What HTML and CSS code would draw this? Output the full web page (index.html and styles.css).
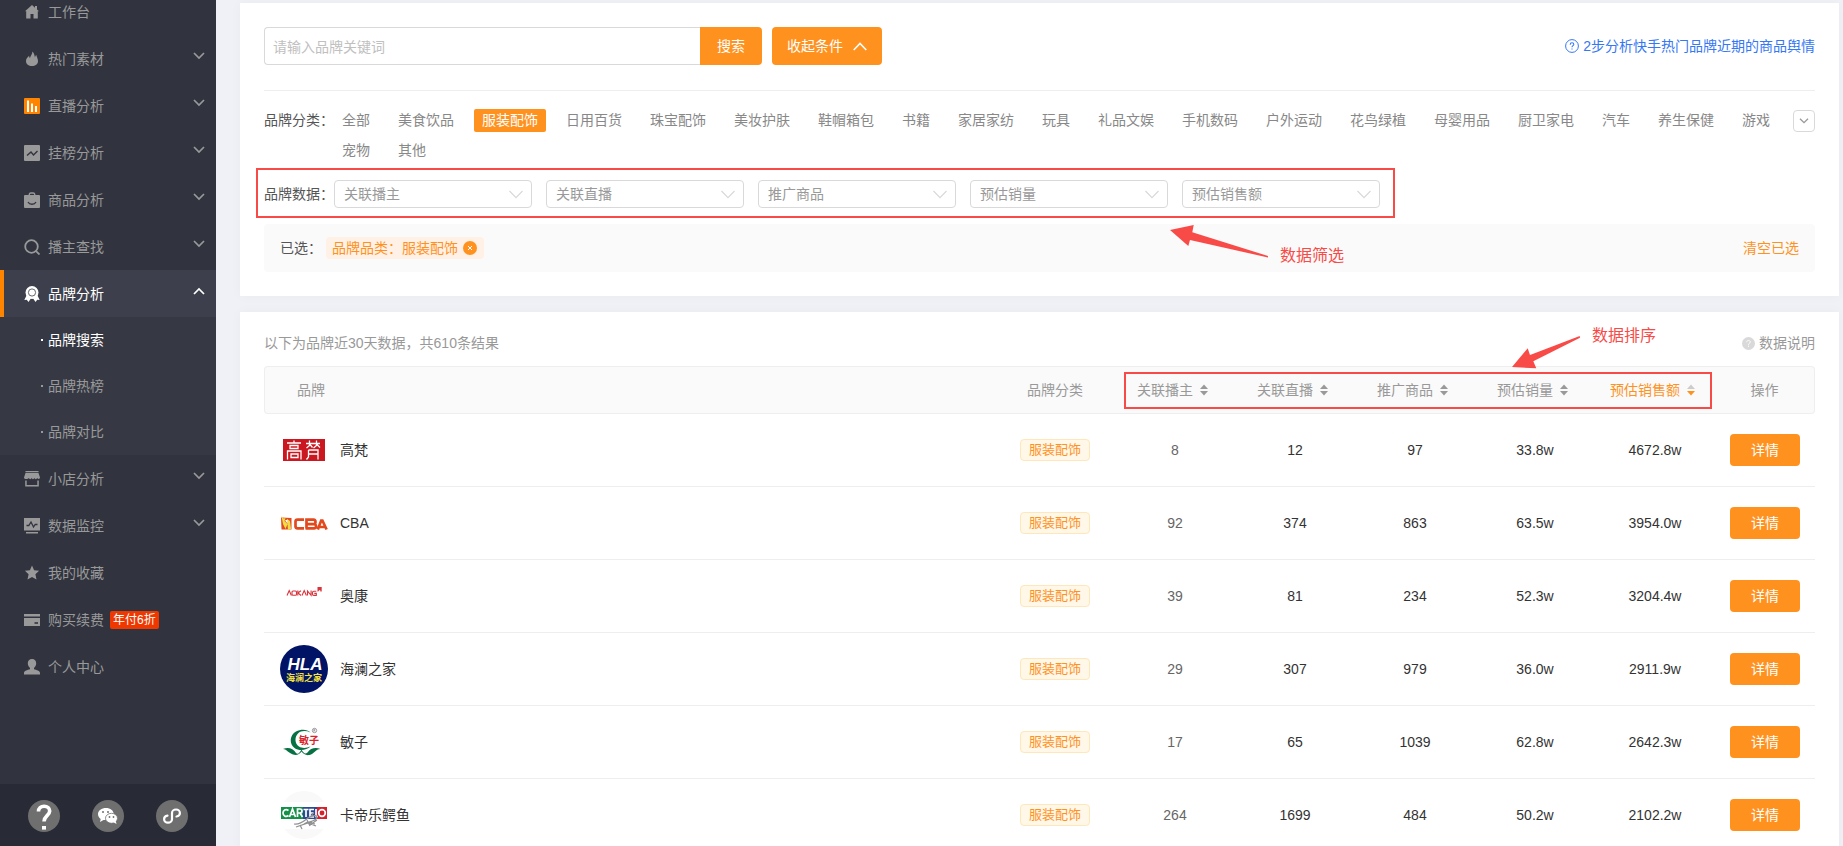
FILE: index.html
```html
<!DOCTYPE html>
<html lang="zh-CN">
<head>
<meta charset="utf-8">
<meta name="viewport" content="width=device-width, initial-scale=1">
<title>品牌搜索</title>
<link rel="stylesheet" href="styles.css">
</head>
<body>
<svg class="defs" aria-hidden="true">
  <symbol id="down" viewBox="0 0 12 8"><path d="M1 1l5 5 5-5" fill="none" stroke="currentColor" stroke-width="1.7"/></symbol>
  <symbol id="thin-down" viewBox="0 0 14 9"><path d="M.5 1L7 7.700 13.500 1" fill="none" stroke="currentColor" stroke-width="1.100"/></symbol>
  <symbol id="sort" viewBox="0 0 8 12"><path class="sort-up" d="M4 .5L8 5H0z"/><path class="sort-down" d="M4 11.500L0 7h8z"/></symbol>
</svg>
<div class="app">
  <aside class="sidebar">
    <nav class="menu">
      <a class="item" href="#"><svg class="icon" viewBox="0 0 16 16"><path d="M8 1L1 7.200h1.200V14.500H6.500V10h3v4.500h4.300V7.200H15l-2-1.800V2h-2v1.700z"/></svg><span>工作台</span></a>
      <a class="item" href="#"><svg class="icon" viewBox="0 0 16 16"><path d="M8.300.500C8.600 3 6.600 4.200 6 7c-.7-.5-.9-1.300-.8-2.200C3.200 6.300 2 8 2 10c0 3.200 2.700 5 6 5s6-1.800 6-5c0-2.300-1.200-3.800-1.700-6-.9.800-1.200 1.500-1.300 2.500C10.500 4.500 10.200 2 8.300.500z"/></svg><span>热门素材</span><svg class="chev"><use href="#down"/></svg></a>
      <a class="item" href="#"><svg class="icon" viewBox="0 0 16 16"><rect width="16" height="16" rx="1" fill="#ff8400"/><path d="M3 2.500h2V14H3zM7 5.500h2V14H7zM11 8h2v6h-2z" fill="#fff"/></svg><span>直播分析</span><svg class="chev"><use href="#down"/></svg></a>
      <a class="item" href="#"><svg class="icon" viewBox="0 0 16 16"><rect width="16" height="16" rx="1"/><path d="M3 10.500l4-3.500 2.500 3L13.500 6" fill="none" stroke="#31343f" stroke-width="1.400"/></svg><span>挂榜分析</span><svg class="chev"><use href="#down"/></svg></a>
      <a class="item" href="#"><svg class="icon" viewBox="0 0 16 16"><path d="M5.300 3.500V2.200A1.500 1.500 0 0 1 6.800 1h2.400a1.500 1.500 0 0 1 1.500 1.200v1.300" fill="none" stroke="currentColor" stroke-width="1.400"/><rect y="3" width="16" height="13" rx="1"/><path d="M4 10c1.500 3 6.500 3 8 0" fill="none" stroke="#31343f" stroke-width="1.300"/></svg><span>商品分析</span><svg class="chev"><use href="#down"/></svg></a>
      <a class="item" href="#"><svg class="icon" viewBox="0 0 16 16"><g fill="none" stroke="currentColor" stroke-width="1.800"><circle cx="7.500" cy="7.500" r="6.300"/><path d="M11.800 11.800l3.700 3.700"/></g></svg><span>播主查找</span><svg class="chev"><use href="#down"/></svg></a>
      <a class="item active" href="#"><svg class="icon" viewBox="0 0 16 16"><path d="M3 8.500L.3 14l2.500-.2L4.500 16l2.700-4h1.600l2.700 4 1.700-2.200 2.500.2L13 8.500z"/><circle cx="8" cy="6.500" r="6.500"/><circle cx="8" cy="6.500" r="3.600" fill="none" stroke="#3d404c" stroke-width=".8"/></svg><span>品牌分析</span><svg class="chev up"><use href="#down"/></svg></a>
      <div class="submenu">
        <a class="sub current" href="#">品牌搜索</a>
        <a class="sub" href="#">品牌热榜</a>
        <a class="sub" href="#">品牌对比</a>
      </div>
      <a class="item" href="#"><svg class="icon" viewBox="0 0 16 16"><path d="M1.500 0h13v1.200h-13zM1.500 2h13L16 6.500c0 1.500-2 2-2.700.5-.7 1.500-2.400 1.500-2.900 0-.5 1.500-2.300 1.500-2.800 0-.5 1.500-2.200 1.500-2.900 0C4 8.500 0 8.500 0 6.500zM1.200 9.500h1.500V14h10.600V9.500h1.500v6H1.200z"/></svg><span>小店分析</span><svg class="chev"><use href="#down"/></svg></a>
      <a class="item" href="#"><svg class="icon" viewBox="0 0 16 16"><path d="M0 0h16v12.500H0zM2 14h12v1.600H2z"/><path d="M2.500 7.500h2.300L7 4l2.500 5 1.700-2.500h2.300" fill="none" stroke="#31343f" stroke-width="1.300"/></svg><span>数据监控</span><svg class="chev"><use href="#down"/></svg></a>
      <a class="item" href="#"><svg class="icon" viewBox="0 0 16 16"><path d="M8 .5l2.100 4.700 5 .6-3.700 3.400 1.100 5.300L8 12l-4.500 2.500 1.100-5.300L.9 5.800l5-.6z"/></svg><span>我的收藏</span></a>
      <a class="item" href="#"><svg class="icon" viewBox="0 0 16 16"><path d="M0 2h16v2.500H0zM0 6h16v8H0z"/><path d="M10.500 10.200h3.500v1.600h-3.500z" fill="#31343f"/></svg><span>购买续费</span><em class="promo">年付6折</em></a>
      <a class="item" href="#"><svg class="icon" viewBox="0 0 16 16"><path d="M8 0c2.600 0 4.200 1.800 4.200 4.300 0 2-1 3.800-2.200 4.700v1.200c2.500.8 6 1.500 6 3.800v1.500H0V14c0-2.300 3.500-3 6-3.800V9C4.800 8.100 3.800 6.300 3.800 4.300 3.800 1.800 5.400 0 8 0z"/></svg><span>个人中心</span></a>
    </nav>
    <div class="tools">
      <button class="tool" aria-label="帮助"><svg viewBox="0 0 32 32"><path d="M10.500 11.500c0-3.500 2.400-5.300 5.600-5.300 3.300 0 5.600 1.900 5.600 4.800 0 4.500-5.700 5-5.700 10.500" fill="none" stroke="#fff" stroke-width="3.600"/><path d="M14 26h4v3.600h-4z" fill="#fff"/></svg></button>
      <button class="tool" aria-label="微信"><svg viewBox="0 0 32 32"><path d="M14 8c4.300 0 7.700 2.600 7.700 6-4.300-.2-7.700 2-7.700 6h-2.500L8 22l.7-3C7 17.800 6 16 6 14c0-3.400 3.700-6 8-6z" fill="#fff"/><ellipse cx="19.500" cy="18.300" rx="6" ry="5" fill="#fff" stroke="#6f6f6f" stroke-width=".8"/><path d="M21 22l3.500 2-.7-3z" fill="#fff"/><g fill="#6f6f6f"><circle cx="11" cy="12" r="1"/><circle cx="16" cy="12" r="1"/><circle cx="17.500" cy="17" r=".9"/><circle cx="21.500" cy="17" r=".9"/></g></svg></button>
      <button class="tool" aria-label="小程序"><svg viewBox="0 0 32 32"><path d="M20.500 16.500c2-.3 3.400-1.700 3.400-3.500 0-2-1.700-3.500-3.900-3.500s-4 1.500-4 3.500v6.200c0 2-1.800 3.500-4 3.500s-3.900-1.500-3.900-3.500c0-1.800 1.400-3.200 3.400-3.500" fill="none" stroke="#fff" stroke-width="2.200" stroke-linecap="round"/></svg></button>
    </div>
  </aside>

  <main class="main">
    <section class="card filters">
      <div class="top">
        <form class="search">
          <input class="search-input" type="text" aria-label="品牌关键词" placeholder="请输入品牌关键词">
          <button class="btn search-btn" type="button">搜索</button>
        </form>
        <button class="btn fold" type="button">收起条件<svg viewBox="0 0 14 9"><path d="M.7 8L7 1.500 13.300 8" fill="none" stroke="#fff" stroke-width="1.600"/></svg></button>
        <a class="guide" href="#"><svg viewBox="0 0 14 14"><circle cx="7" cy="7" r="6.400" fill="none" stroke="currentColor"/><path d="M5.200 5.700c0-1.200.8-1.900 1.800-1.900s1.800.6 1.800 1.600C8.800 6.700 7 6.700 7 8.300M7 9.400v1.100" fill="none" stroke="currentColor" stroke-width="1.100"/></svg>2步分析快手热门品牌近期的商品舆情</a>
      </div>
      <div class="line categories">
        <span class="label">品牌分类：</span>
        <div class="options">
          <a href="#">全部</a><a href="#">美食饮品</a><a class="on" href="#">服装配饰</a><a href="#">日用百货</a><a href="#">珠宝配饰</a><a href="#">美妆护肤</a><a href="#">鞋帽箱包</a><a href="#">书籍</a><a href="#">家居家纺</a><a href="#">玩具</a><a href="#">礼品文娱</a><a href="#">手机数码</a><a href="#">户外运动</a><a href="#">花鸟绿植</a><a href="#">母婴用品</a><a href="#">厨卫家电</a><a href="#">汽车</a><a href="#">养生保健</a><a href="#">游戏</a><a href="#">宠物</a><a href="#">其他</a>
        </div>
        <button class="more" type="button" aria-label="展开分类"><svg viewBox="0 0 10 6"><path d="M1 .7l4 4 4-4" fill="none" stroke="#999" stroke-width="1.300"/></svg></button>
      </div>
      <div class="line metrics">
        <span class="label">品牌数据：</span>
        <div class="selects">
          <label class="pick"><select aria-label="关联播主"><option>关联播主</option></select><svg><use href="#thin-down"/></svg></label>
          <label class="pick"><select aria-label="关联直播"><option>关联直播</option></select><svg><use href="#thin-down"/></svg></label>
          <label class="pick"><select aria-label="推广商品"><option>推广商品</option></select><svg><use href="#thin-down"/></svg></label>
          <label class="pick"><select aria-label="预估销量"><option>预估销量</option></select><svg><use href="#thin-down"/></svg></label>
          <label class="pick"><select aria-label="预估销售额"><option>预估销售额</option></select><svg><use href="#thin-down"/></svg></label>
        </div>
        <div class="frame frame-filter"></div>
        <div class="note note-filter">
          <svg viewBox="0 0 98 33" width="98" height="33"><path d="M0 5L23.700 0 22.300 7.300 98 31v1.500L20 15l-1.700 6z"/></svg>
          <span>数据筛选</span>
        </div>
      </div>
      <div class="chosen">
        <span>已选：</span>
        <span class="chip">品牌品类：服装配饰<button type="button" aria-label="移除"><svg viewBox="0 0 14 14"><circle cx="7" cy="7" r="7" fill="#ff921e"/><path d="M5 5l4 4M9 5l-4 4" stroke="#fff"/></svg></button></span>
        <a class="clear" href="#">清空已选</a>
      </div>
    </section>

    <section class="card results">
      <div class="summary">
        <span>以下为品牌近30天数据，共610条结果</span>
        <a class="about" href="#"><svg viewBox="0 0 13 13"><circle cx="6.500" cy="6.500" r="6.500" fill="#d9d9d9"/><path d="M4.700 5.200c0-1.100.8-1.700 1.800-1.700s1.800.6 1.800 1.500c0 1.200-1.800 1.300-1.800 2.700M6.500 8.700v1.100" fill="none" stroke="#fff"/></svg>数据说明</a>
      </div>
      <div class="table-area">
        <table class="table">
          <colgroup><col><col class="c-metric"><col class="c-metric"><col class="c-metric"><col class="c-metric"><col class="c-metric"><col class="c-metric"><col class="c-action"></colgroup>
          <thead>
            <tr>
              <th class="brand-head">品牌</th>
              <th>品牌分类</th>
              <th><button class="sort">关联播主<svg><use href="#sort"/></svg></button></th>
              <th><button class="sort">关联直播<svg><use href="#sort"/></svg></button></th>
              <th><button class="sort">推广商品<svg><use href="#sort"/></svg></button></th>
              <th><button class="sort">预估销量<svg><use href="#sort"/></svg></button></th>
              <th><button class="sort desc">预估销售额<svg><use href="#sort"/></svg></button></th>
              <th>操作</th>
            </tr>
          </thead>
          <tbody>
            <tr>
              <td><div class="brand"><svg class="logo" viewBox="0 0 48 48"><rect x="3" y="13" width="42" height="22" fill="#cb1820"/><g fill="none" stroke="#fff" stroke-width="1.300"><path d="M14 14.500v2M7 17h14M10 19.500h8v3h-8zM7.500 33.500V25h13.500v8.500M11 28h7v3.500h-7zM26 17.500h14M29.500 14.500v5l-3 2.500M29.500 18l3 3.500M36.500 14.500v5l-3 2.500M36.500 18l3.500 3.500M28.500 24h9.500v4h-9.500v3l-2 2.500M38 24v9.500M28.500 28v-4"/></g></svg>高梵</div></td>
              <td><span class="tag">服装配饰</span></td>
              <td class="soft">8</td><td>12</td><td>97</td><td>33.8w</td><td>4672.8w</td>
              <td><button class="btn detail">详情</button></td>
            </tr>
            <tr>
              <td><div class="brand"><svg class="logo" viewBox="0 0 48 48"><path d="M1 18.500L11.500 19v11.500H1.500z" fill="#e14a20"/><path d="M1.500 17l2 2.500 2-.5-1 3 3 3-2 5-2.500-5zM7 20l3 2 1 8-3 1z" fill="#f0dd45"/><path d="M5 21.500l2.500-1v4z" fill="#fff"/><g fill="none" stroke="#e2491d" stroke-width="2.700"><path d="M24 20.700h-6.500q-2 0-2 2v4.600q0 2 2 2H24M26.500 29.500v-8.800h7q2 0 2 2.200t-2 2.200H26M33.500 25q2.500 0 2.500 2.300t-2.500 2H25.500M37.800 30.500l3.400-9h1.200l4.200 9M39.500 28h5.500"/></g></svg>CBA</div></td>
              <td><span class="tag">服装配饰</span></td>
              <td class="soft">92</td><td>374</td><td>863</td><td>63.5w</td><td>3954.0w</td>
              <td><button class="btn detail">详情</button></td>
            </tr>
            <tr>
              <td><div class="brand"><svg class="logo" viewBox="0 0 48 48"><g fill="none" stroke="#d9333b" stroke-width="1.100"><path d="M7 23.500l2.200-5 2.200 5"/><rect x="12" y="19" width="4.500" height="4.200" rx="1"/><path d="M17.800 18.500v5M21 18.700l-3 2.200 3 2.600M22 23.500l2.200-5 2.200 5M27.500 23.500v-4.400l3.600 4.200v-4.700M36.300 19.200h-2.500q-1.300 0-1.300 1.200v1.800q0 1.200 1.300 1.200h2.500v-2h-2"/></g><path d="M37.500 15h4.200v4.500h-1.400V18.300h-1.200l-.8 1.200h-.8z" fill="#d9333b"/></svg>奥康</div></td>
              <td><span class="tag">服装配饰</span></td>
              <td class="soft">39</td><td>81</td><td>234</td><td>52.3w</td><td>3204.4w</td>
              <td><button class="btn detail">详情</button></td>
            </tr>
            <tr>
              <td><div class="brand"><svg class="logo" viewBox="0 0 48 48"><circle cx="24" cy="24" r="24" fill="#001364"/><text class="hla" x="25" y="25" text-anchor="middle">HLA</text><text class="hla-cn" x="24" y="36" text-anchor="middle">海澜之家</text></svg>海澜之家</div></td>
              <td><span class="tag">服装配饰</span></td>
              <td class="soft">29</td><td>307</td><td>979</td><td>36.0w</td><td>2911.9w</td>
              <td><button class="btn detail">详情</button></td>
            </tr>
            <tr>
              <td><div class="brand"><svg class="logo" viewBox="0 0 48 48"><path d="M30.500 14.500C27 11 21 11 16 13.500 9.500 17 9 26 14.500 30c4.500 3.200 12 2.500 16-1.500-4 1.800-8.500 2-11.500 0-4.500-3-4.500-9.500-1-13C21 12.500 26 12.500 30.500 14.500z" fill="#087143"/><path d="M3 31c5-2 10-1 13 4 2 2 3.500 0 5.500-3.500 2 3.500 3.500 5 6 3 3-4.500 8-5.500 13-3.500-5 0-6.500 5-11 6-4 .6-6-1-8-3.500-2 3-5 4-8.500 3C8.500 35 7 31.500 3 31z" fill="#087143"/><text class="minzi" x="19" y="26">敏子</text><circle cx="34.500" cy="12.500" r="2.200" fill="none" stroke="#777" stroke-width=".7"/><path d="M33.800 13.700v-2.300h1.200v1h-1l1.200 1.300" fill="none" stroke="#777" stroke-width=".5"/></svg>敏子</div></td>
              <td><span class="tag">服装配饰</span></td>
              <td class="soft">17</td><td>65</td><td>1039</td><td>62.8w</td><td>2642.3w</td>
              <td><button class="btn detail">详情</button></td>
            </tr>
            <tr>
              <td><div class="brand"><svg class="logo" viewBox="0 0 48 48"><circle cx="24" cy="24" r="24" fill="#f9f9f9"/><path d="M0 11h48v27H0z" fill="#fff"/><path d="M1 16h22v12H1z" fill="#149148"/><path d="M23 16h14v12H23z" fill="#2b4a94"/><path d="M37 16h10v12H37z" fill="#d8202c"/><g fill="none" stroke="#fff" stroke-width="1.700"><path d="M8.500 19.500c-3-2-5.500 0-5.500 2.500s2.500 4.500 5.500 2.500M9.500 26l3-8 3 8M10.800 23.500h3.700M17.500 26v-8h2.500q2 0 2 2t-2 2h-2.500M20 22l2.500 4M23.500 18.500h5M26 18.500V26M34 18.500h-4V26h4M30 22h3.500M36 18v7.500h2"/><circle cx="42" cy="22" r="3.300"/></g><path d="M14 33c6 1 10-3 14-6s9-3 9-1-4 4-8 5l6 2M16 36l12-4 8 3M20 34l2 4M27 29l3 6M31 26l2-4M24 33q4-3 8-2M30 34l7-5" fill="none" stroke="#909090" stroke-width="1.200"/></svg>卡帝乐鳄鱼</div></td>
              <td><span class="tag">服装配饰</span></td>
              <td class="soft">264</td><td>1699</td><td>484</td><td>50.2w</td><td>2102.2w</td>
              <td><button class="btn detail">详情</button></td>
            </tr>
          </tbody>
        </table>
        <div class="frame frame-sort"></div>
        <div class="note note-sort">
          <svg viewBox="0 0 68 33" width="68" height="33"><path d="M0 31L15.700 12.300 18 19 67.700 0 68 1.700 21.300 25.300 24.300 32.300z"/></svg>
          <span>数据排序</span>
        </div>
      </div>
    </section>
  </main>
</div>
</body>
</html>
```

FILE: styles.css
```css
* { box-sizing: border-box; }
body {
  margin: 0;
  font: 14px/20px "Liberation Sans", "Noto Sans CJK SC", sans-serif;
  color: #333;
  background: #f0f1f6;
}
a { color: inherit; text-decoration: none; }
button, input, select { font: inherit; color: inherit; margin: 0; padding: 0; border: 0; background: none; }
button { cursor: pointer; }
svg { display: block; flex: none; fill: currentColor; }
.defs { position: absolute; width: 0; height: 0; }

.app { display: flex; height: 100vh; overflow: hidden; }

/* Sidebar */
.sidebar {
  flex: none;
  width: 216px;
  display: flex;
  flex-direction: column;
  background: #31343f;
  color: #999;
}
.menu { flex: 1; min-height: 0; margin-top: -12px; }
.item {
  display: flex;
  align-items: center;
  height: 47px;
  padding: 0 11px 0 20px;
  border-left: 4px solid transparent;
}
.icon { width: 16px; height: 16px; margin-right: 8px; }
.chev { width: 12px; height: 8px; margin-left: auto; margin-bottom: 6px; }
.chev.up { transform: rotate(180deg); }
.item.active { background: #3d404c; border-left-color: #ff8400; color: #fff; }
.submenu { background: #363944; }
.sub { display: flex; align-items: center; height: 46px; padding-left: 41px; }
.sub::before { content: ""; width: 2px; height: 2px; margin-right: 5px; background: currentColor; }
.sub.current { color: #fff; }
.promo {
  margin-left: 6px;
  padding: 0 3px;
  border-radius: 2px;
  background: #ee3800;
  color: #fff;
  font-size: 12px;
  line-height: 18px;
  font-style: normal;
}
.tools {
  display: flex;
  justify-content: center;
  gap: 32px;
  height: 62px;
  padding: 16px 0;
  background: #282b36;
}
.tool { width: 32px; height: 32px; padding: 0; border-radius: 50%; background: #6f6f6f; }

/* Shared */
.main { flex: 1; min-width: 0; padding: 3px 4px 0 24px; }
.card { background: #fff; box-shadow: 0 0 12px rgba(0, 0, 40, .03); padding: 24px; }
.btn { background: #ff921e; color: #fff; border-radius: 4px; }
.frame { position: absolute; border: 2px solid #f84b48; pointer-events: none; }
.note { position: absolute; display: flex; gap: 12px; color: #f84b48; font-size: 16px; line-height: 24px; white-space: nowrap; pointer-events: none; }

/* Filters */
.top { display: flex; padding-bottom: 25px; border-bottom: 1px solid #eee; }
.search { display: flex; width: 498px; }
.search-input {
  flex: 1;
  min-width: 0;
  height: 38px;
  padding: 2px 8px 0;
  border: 1px solid #d9d9d9;
  border-right: 0;
  border-radius: 4px 0 0 4px;
}
.search-input::placeholder { color: #c0c0c0; opacity: 1; }
.search-btn { width: 62px; border-radius: 0 4px 4px 0; }
.fold { display: flex; align-items: center; gap: 10px; height: 38px; margin-left: 10px; padding: 0 15px; }
.fold svg { width: 14px; height: 9px; }
.guide { display: flex; align-items: center; gap: 4px; margin-left: auto; color: #3577f5; }
.guide svg { width: 14px; height: 14px; }
.line { position: relative; display: flex; }
.label { flex: none; width: 70px; color: #555; }
.categories { padding-top: 18px; }
.categories .label, .options a { line-height: 23px; }
.options { flex: 1; display: flex; flex-wrap: wrap; gap: 7px 12px; color: #888; }
.options a { padding: 0 8px; border-radius: 2px; }
.options .on { background: #ff921e; color: #fff; }
.more {
  display: flex;
  align-items: center;
  justify-content: center;
  width: 22px;
  height: 22px;
  margin: 1px 0 0 12px;
  border: 1px solid #d9d9d9;
  border-radius: 4px;
}
.more svg { width: 10px; height: 6px; }
.metrics { padding-top: 18px; }
.metrics .label { line-height: 28px; }
.selects { display: flex; gap: 14px; }
.pick { position: relative; width: 198px; }
.pick select {
  appearance: none;
  width: 100%;
  height: 28px;
  padding: 0 28px 0 9px;
  border: 1px solid #d9d9d9;
  border-radius: 4px;
  background: #fff;
  color: #999;
}
.pick svg { position: absolute; right: 9px; top: 10px; width: 14px; height: 9px; color: #d8d8d8; pointer-events: none; }
.frame-filter { left: -8px; top: 6px; width: 1139px; height: 50px; }
.note-filter { left: 906px; top: 63px; align-items: flex-end; z-index: 1; }
.note-filter span { margin-bottom: -10px; }
.chosen {
  display: flex;
  align-items: center;
  height: 48px;
  margin-top: 16px;
  padding: 0 16px;
  border-radius: 4px;
  background: #fafafa;
  color: #555;
}
.chip {
  display: flex;
  align-items: center;
  gap: 5px;
  height: 22px;
  margin-left: 4px;
  padding: 0 7px 0 6px;
  border-radius: 4px;
  background: #fff1e6;
  color: #ff921e;
}
.chip svg { width: 14px; height: 14px; }
.clear { margin-left: auto; color: #ff921e; }

/* Results */
.results { margin-top: 16px; padding-top: 20px; }
.summary { display: flex; justify-content: space-between; line-height: 22px; color: #999; }
.about { display: flex; align-items: center; gap: 4px; }
.about svg { width: 13px; height: 13px; }
.table-area { position: relative; margin-top: 12px; }
.table { width: 100%; table-layout: fixed; border-collapse: separate; border-spacing: 0; }
.c-metric { width: 120px; }
.c-action { width: 100px; }
.table th {
  height: 48px;
  padding: 0;
  border: solid #eee;
  border-width: 1px 0;
  background: #fafafa;
  color: #999;
  font-weight: 400;
}
.table th:first-child { border-left-width: 1px; border-radius: 4px 0 0 4px; }
.table th:last-child { border-right-width: 1px; border-radius: 0 4px 4px 0; }
.table .brand-head { padding-left: 32px; text-align: left; }
.table td { height: 73px; padding: 0; border-bottom: 1px solid #eee; text-align: center; }
.table .soft { color: #666; }
.sort { display: inline-flex; align-items: center; gap: 7px; padding-right: 5px; }
.sort svg { width: 8px; height: 12px; color: #999; }
.sort.desc { color: #ff921e; }
.sort.desc svg { fill: #ff921e; color: #ccc; }
.sort-up { fill: currentColor; }
.brand { display: flex; align-items: center; gap: 12px; padding-left: 16px; }
.logo { width: 48px; height: 48px; }
.hla { font: italic bold 17px "Liberation Sans", sans-serif; fill: #fff; }
.hla-cn { font: bold 9px "Noto Sans CJK SC", sans-serif; fill: #f5e13c; }
.minzi { font: bold 10px "Noto Sans CJK SC", sans-serif; fill: #d9242a; }
.tag {
  display: inline-block;
  padding: 0 8px;
  border: 1px solid #ffe7ba;
  border-radius: 4px;
  background: #fff7e8;
  color: #ff921e;
  font-size: 13px;
  line-height: 20px;
}
.detail { width: 70px; height: 32px; }
.frame-sort { top: 6px; right: 103px; width: 588px; height: 37px; }
.note-sort { top: -30px; right: 159px; }
.note-sort span { margin-top: -12px; }
```
